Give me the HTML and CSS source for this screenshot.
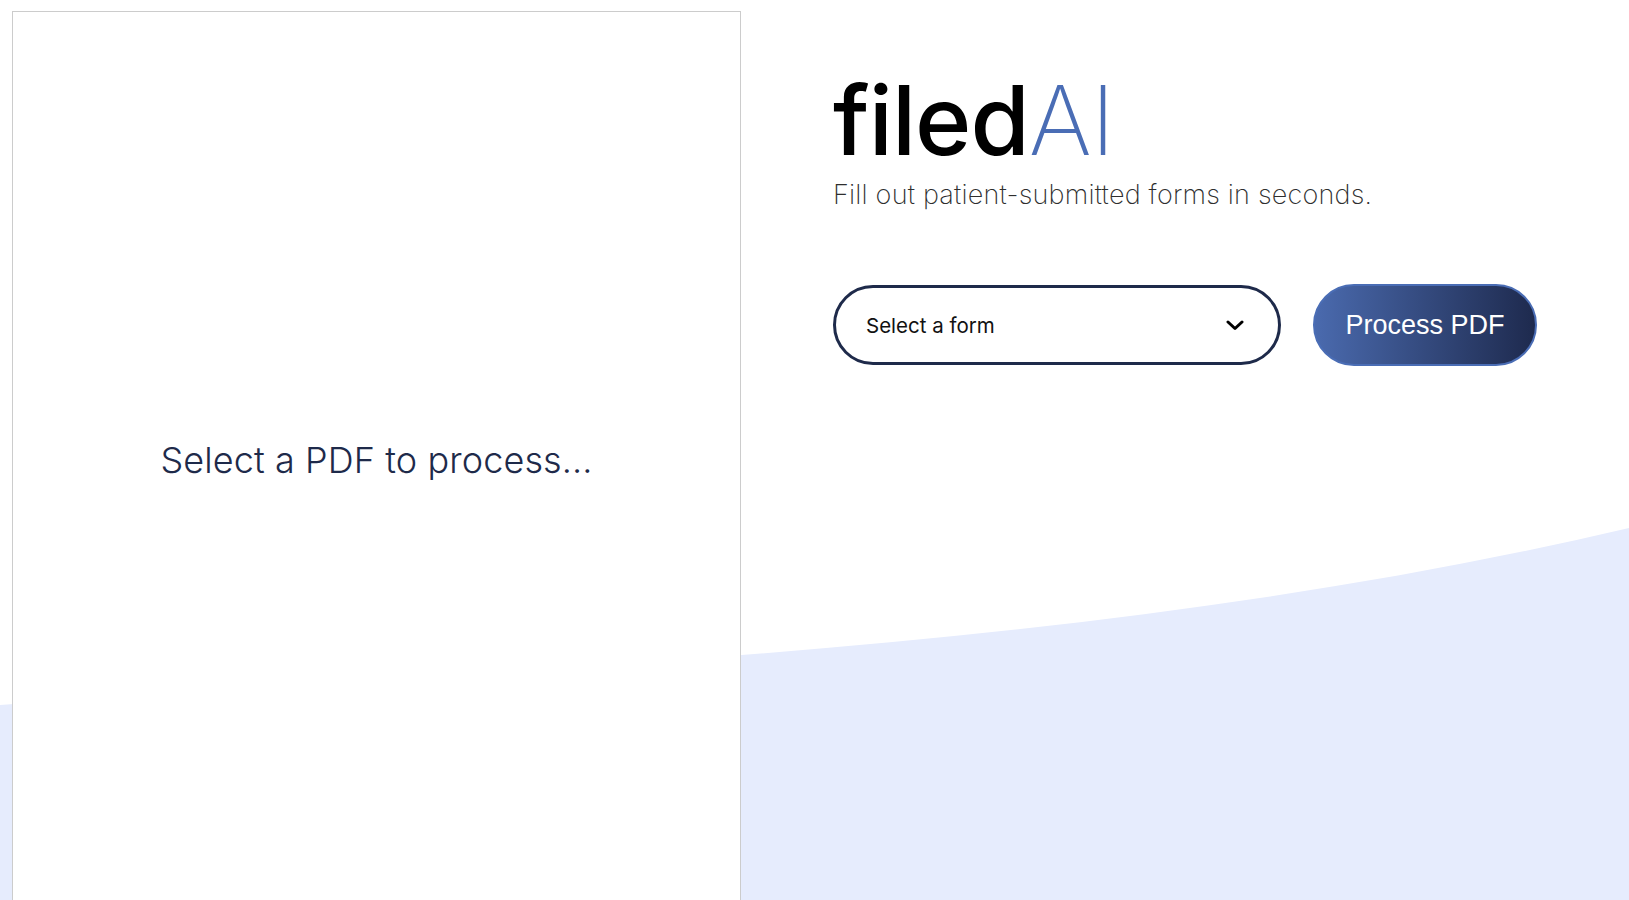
FILE: index.html
```html
<!DOCTYPE html>
<html lang="en">
<head>
<meta charset="utf-8">
<title>filedAI</title>
<link rel="stylesheet" href="styles.css">
</head>
<body>
<svg class="wave" viewBox="0 0 1629 900" preserveAspectRatio="none" aria-hidden="true">
  <path d="M0,705 C543,664.7 1086,655 1629,528 L1629,900 L0,900 Z" fill="#e6ecfd"/>
</svg>
<div class="page">
  <section class="viewer">
    <p class="viewer-empty">Select a PDF to process...</p>
  </section>
  <main class="panel">
    <h1 class="logo"><span class="logo-filed">filed</span><span class="logo-ai">AI</span></h1>
    <p class="tagline">Fill out patient-submitted forms in seconds.</p>
    <div class="controls">
      <div class="select">
        <span class="select-label">Select a form</span>
        <svg class="chevron" viewBox="0 0 18 11" aria-hidden="true">
          <path d="M2 2 L9 8.5 L16 2" fill="none" stroke="#000" stroke-width="3" stroke-linecap="round" stroke-linejoin="round"/>
        </svg>
      </div>
      <button class="process-btn">Process PDF</button>
    </div>
  </main>
</div>
</body>
</html>
```

FILE: styles.css
```css
html, body {
  margin: 0;
  padding: 0;
  height: 100%;
  overflow: hidden;
  background: #ffffff;
}

body {
  font-family: "Inter", "Noto Sans", sans-serif;
  position: relative;
}

.wave {
  position: absolute;
  left: 0;
  top: 0;
  width: 100%;
  height: 900px;
  z-index: 0;
}

.page {
  position: relative;
  z-index: 1;
  display: flex;
  align-items: flex-start;
  padding: 11px 0 0 12px;
}

.viewer {
  box-sizing: border-box;
  width: 729px;
  height: 898px;
  background: #ffffff;
  border: 1px solid #cccccc;
  display: flex;
  align-items: center;
  justify-content: center;
  flex-shrink: 0;
}

.viewer-empty {
  margin: 0;
  font-size: 36px;
  font-weight: 300;
  color: #1e2a4a;
  letter-spacing: 0.1px;
}

.panel {
  padding-left: 92px;
  padding-top: 61px;
}

.logo {
  margin: 0;
  font-size: 96px;
  line-height: 1;
  letter-spacing: -1px;
  font-weight: 500;
}

.logo-filed {
  color: #000000;
}

.logo-ai {
  color: #4a6db5;
  font-weight: 200;
}

.tagline {
  margin: 10px 0 0 0;
  font-size: 27px;
  font-weight: 200;
  letter-spacing: 0.2px;
  color: #2e2e2e;
}

.controls {
  display: flex;
  align-items: center;
  gap: 32px;
  margin-top: 73px;
}

.select {
  box-sizing: border-box;
  width: 448px;
  height: 80px;
  border: 3px solid #1e2a4a;
  border-radius: 40px;
  display: flex;
  align-items: center;
  justify-content: space-between;
  padding: 0 34px 0 30px;
  background: #ffffff;
}

.select-label {
  font-size: 20.5px;
  color: #111111;
}

.chevron {
  width: 18px;
  height: 11px;
}

.process-btn {
  box-sizing: border-box;
  width: 224px;
  height: 82px;
  border-radius: 41px;
  border: 2px solid #4a6db5;
  background: linear-gradient(to right, #4a6aae, #1e2a4e);
  color: #ffffff;
  font-family: "Liberation Sans", Arial, sans-serif;
  font-size: 27px;
  cursor: pointer;
}
```
